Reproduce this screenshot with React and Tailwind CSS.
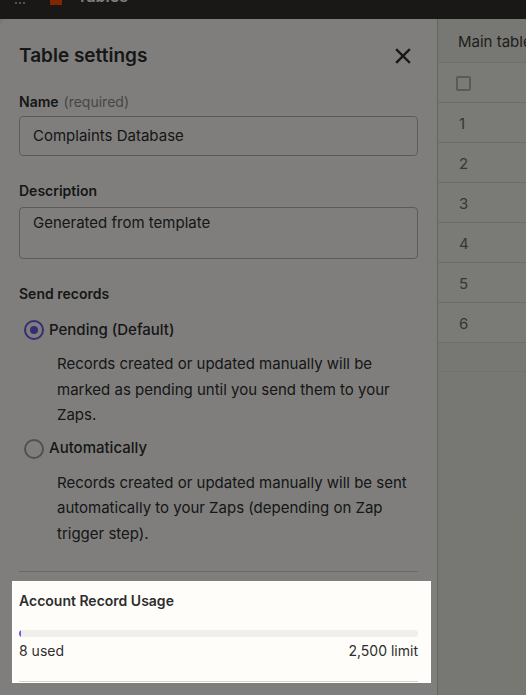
import React from 'react';

const ROWS = [1, 2, 3, 4, 5, 6];

function Radio({ checked, label, children }) {
  return (
    <div>
      <div className="flex h-6 items-center gap-[5px] pl-[5px]">
        {checked ? (
          <span className="flex h-5 w-5 items-center justify-center rounded-full border-2 border-[#695be8]">
            <span className="h-2 w-2 rounded-full bg-[#695be8]" />
          </span>
        ) : (
          <span className="h-5 w-5 rounded-full border-2 border-[#a3a19c]" />
        )}
        <span className="text-[15px] font-medium text-[#2d2e2e]">{label}</span>
      </div>
      <p className="mt-[9px] pl-[38px] text-[15px] leading-[25.5px] text-[#2d2e2e]">{children}</p>
    </div>
  );
}

export default function App() {
  return (
    <div className="relative h-[695px] w-[526px] overflow-hidden bg-[#efefe6] font-['Inter',sans-serif]">
      {/* top bar, scrolled mostly out of view */}
      <div className="flex h-[19px] items-start overflow-hidden bg-[#35302c]">
        <div className="-mt-[13px] flex items-center">
          <span className="ml-[15px] mt-[14px] flex gap-[2px]">
            <span className="h-[2px] w-[2px] rounded-full bg-[#cfcbc6]" />
            <span className="h-[2px] w-[2px] rounded-full bg-[#cfcbc6]" />
            <span className="h-[2px] w-[2px] rounded-full bg-[#cfcbc6]" />
          </span>
          <span className="ml-[25px] mt-[10px] h-[8px] w-[12px] bg-[#ff4f00]" />
          <span className="ml-[15px] text-[16px] font-semibold leading-[18px] text-[#fffdf9]">Tables</span>
        </div>
      </div>

      <div className="flex h-[676px]">
        {/* settings panel */}
        <aside className="w-[438px] shrink-0 rounded-tl-lg border-r border-[#c9c8c0] bg-[#fffdf9] pl-[19px] pr-[19px] pt-[23px]">
          <div className="flex h-7 items-center justify-between">
            <h1 className="text-[19px] font-semibold leading-7 text-[#2d2e2e]">Table settings</h1>
            <svg width="16" height="16" viewBox="0 0 16 16" className="mr-[7px]">
              <path d="M2 2L14 14M14 2L2 14" stroke="#2d2e2e" strokeWidth="2.4" strokeLinecap="square" />
            </svg>
          </div>

          <div className="mt-[22px] text-[14px] leading-5">
            <span className="font-semibold text-[#2d2e2e]">Name</span>
            <span className="ml-[5px] text-[#8e8c88]">(required)</span>
          </div>
          <div className="mt-[4px] flex h-10 items-center rounded border border-[#b8b5ae] px-[13px] text-[15px] text-[#2d2e2e]">
            Complaints Database
          </div>

          <div className="mt-[25px] text-[14px] font-semibold leading-5 text-[#2d2e2e]">Description</div>
          <div className="mt-[6px] h-[52px] rounded border border-[#b8b5ae] px-[13px] pt-[4px] text-[15px] leading-[22px] text-[#2d2e2e]">
            Generated from template
          </div>

          <div className="mt-[25px] text-[14px] font-semibold leading-5 text-[#2d2e2e]">Send records</div>
          <div className="mt-[14px]">
            <Radio checked label="Pending (Default)">
              Records created or updated manually will be marked as pending until you send them to your Zaps.
            </Radio>
          </div>
          <div className="mt-[9px]">
            <Radio label="Automatically">
              Records created or updated manually will be sent automatically to your Zaps (depending on Zap trigger step).
            </Radio>
          </div>

          <div className="mt-[25px] h-px bg-[#d5d3cd]" />

          {/* highlighted usage block, sits above the overlay */}
          <div className="relative z-20 -ml-[7px] -mr-[13px] mt-[9px] h-[102px] border border-white bg-[#fffdf9] pl-[6px] pr-[12px] pt-[9px]">
            <div className="text-[14px] font-semibold leading-5 text-[#2d2e2e]">Account Record Usage</div>
            <div className="mt-[19px] h-[7px] overflow-hidden rounded-full bg-[#f0efea]">
              <div className="h-full bg-[#695be8]" style={{ width: `${Math.max((8 / 2500) * 100, 0.5)}%` }} />
            </div>
            <div className="mt-[4px] flex justify-between text-[14px] leading-5 text-[#2d2e2e]">
              <span>8 used</span>
              <span>2,500 limit</span>
            </div>
            <div className="mt-[20px] h-px bg-[#d5d3cd]" />
          </div>
        </aside>

        {/* table behind */}
        <div className="flex-1 overflow-hidden">
          <div className="flex h-[44px] items-center whitespace-nowrap border-b border-[#dcdcd3] pl-[20px] pt-[4px] text-[15px] text-[#3d3d3a]">
            Main table
          </div>
          <div className="bg-[#f4f4ed]">
            <div className="flex h-10 items-center border-b border-[#dcdcd3] pl-[18px] pt-[2px]">
              <span className="h-[15px] w-[15px] rounded-[2px] border-2 border-[#b5b4ad]" />
            </div>
            {ROWS.map((n) => (
              <div key={n} className="flex h-10 items-center border-b border-[#dcdcd3] pl-[21px] pt-[3px] text-[15px] text-[#6f6f6b]">
                {n}
              </div>
            ))}
          </div>
          <div className="h-[29px] border-b border-[#e2e2da] bg-[#eeeee6]" />
        </div>
      </div>

      <div className="absolute inset-0 z-10 bg-black/50" />
    </div>
  );
}
